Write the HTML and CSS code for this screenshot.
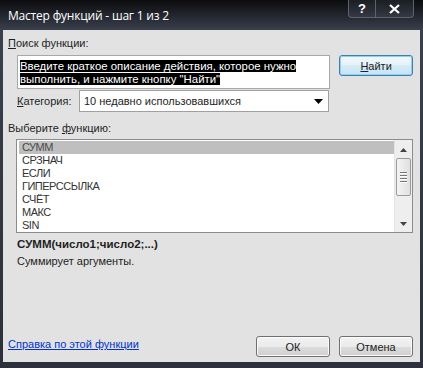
FILE: index.html
```html
<!DOCTYPE html>
<html lang="ru">
<head>
    <meta charset="UTF-8">
    <title>Мастер функций - шаг 1 из 2</title>
    <link rel="stylesheet" href="styles.css">
</head>
<body>

    <div class="window">
        <div class="titlebar">
            <div class="title">Мастер функций - шаг 1 из 2</div>
            <div class="caption-buttons">
                <div class="cap-btn cap-help">?</div>
                <div class="cap-btn cap-close">
                    <svg width="11" height="10" viewBox="0 0 11 10">
                        <path d="M1 1 L10 9 M10 1 L1 9" stroke="#fff" stroke-width="2.2"/>
                    </svg>
                </div>
            </div>
        </div>

        <div class="client">
            <div class="label"><u>П</u>оиск функции:</div>

            <div class="search-row">
                <div class="search-box">
                    <span class="selected-text">Введите краткое описание действия, которое нужно</span><br>
                    <span class="selected-text">выполнить, и нажмите кнопку "Найти"</span>
                </div>
                <div class="btn btn-default"><u>Н</u>айти</div>
            </div>

            <div class="category-row">
                <div class="label-inline"><u>К</u>атегория:</div>
                <div class="select">
                    <span>10 недавно использовавшихся</span>
                    <svg class="select-arrow" width="9" height="5" viewBox="0 0 9 5">
                        <path d="M0 0 H9 L4.5 5 Z" fill="#000"/>
                    </svg>
                </div>
            </div>

            <div class="label list-label">Выберите <u>ф</u>ункцию:</div>

            <div class="listbox">
                <div class="list-items">
                    <div class="item item-selected">СУММ</div>
                    <div class="item">СРЗНАЧ</div>
                    <div class="item">ЕСЛИ</div>
                    <div class="item">ГИПЕРССЫЛКА</div>
                    <div class="item">СЧЁТ</div>
                    <div class="item">МАКС</div>
                    <div class="item">SIN</div>
                </div>
                <div class="scrollbar">
                    <svg class="sb-arrow" width="7" height="4" viewBox="0 0 7 4">
                        <path d="M0 4 H7 L3.5 0 Z" fill="#444"/>
                    </svg>
                    <div class="sb-track">
                        <div class="sb-thumb">
                            <div class="grip"></div>
                            <div class="grip"></div>
                            <div class="grip"></div>
                            <div class="grip"></div>
                        </div>
                    </div>
                    <svg class="sb-arrow" width="7" height="4" viewBox="0 0 7 4">
                        <path d="M0 0 H7 L3.5 4 Z" fill="#444"/>
                    </svg>
                </div>
            </div>

            <div class="syntax">СУММ(число1;число2;...)</div>
            <div class="description">Суммирует аргументы.</div>

            <div class="footer">
                <a class="help-link" href="#">Справка по этой функции</a>
                <div class="footer-buttons">
                    <div class="btn">ОК</div>
                    <div class="btn">Отмена</div>
                </div>
            </div>
        </div>
    </div>

</body>
</html>
```

FILE: styles.css
```css
body {
    margin: 0;
    padding: 0;
    background: #1a1d24;
    font-family: 'Liberation Sans', Arial, sans-serif;
    font-size: 11px;
    color: #1e1e1e;
}

.window {
    width: 423px;
    height: 368px;
    box-sizing: border-box;
    padding: 0 3px 6px 3px;
    background: linear-gradient(#0c0c0e 0px, #2a2e38 20px, #3a404c 30px, #2c303a 100%);
    display: flex;
    flex-direction: column;
}

.titlebar {
    height: 30px;
    display: flex;
    justify-content: space-between;
    flex-shrink: 0;
}

.title {
    color: #fff;
    font-family: 'Open Sans', sans-serif;
    font-size: 12px;
    padding: 7px 0 0 5px;
    letter-spacing: -0.2px;
}

.caption-buttons {
    display: flex;
    height: 17px;
    margin-right: 6px;
    border: 1px solid #5c6270;
    border-top: none;
    border-radius: 0 0 4px 4px;
    background: linear-gradient(#1c1e24, #343842);
}

.cap-btn {
    display: flex;
    justify-content: center;
    align-items: center;
    color: #fff;
    font-weight: bold;
    font-size: 13px;
}

.cap-help {
    width: 26px;
    border-right: 1px solid #5c6270;
}

.cap-close {
    width: 37px;
}

.client {
    flex: 1;
    background: #e2e2e2;
    padding: 6px 7px 0 5px;
    display: flex;
    flex-direction: column;
}

.label {
    line-height: 14px;
}

.search-row {
    display: flex;
    margin-top: 5px;
    padding-left: 9px;
}

.search-box {
    width: 305px;
    height: 28px;
    background: #fff;
    border: 1px solid #a8a8a8;
    padding: 4px 5px 0 2px;
    font-size: 11.4px;
    line-height: 13px;
}

.selected-text {
    background: #000;
    color: #fff;
}

.btn {
    width: 72px;
    height: 19px;
    border: 1px solid #707070;
    border-radius: 3px;
    background: linear-gradient(#f2f2f2 0%, #ebebeb 50%, #dddddd 50%, #cfcfcf 100%);
    display: flex;
    justify-content: center;
    align-items: center;
    box-shadow: inset 0 0 0 1px #fbfbfb;
    color: #222;
}

.btn-default {
    margin-left: 9px;
    border-color: #3c7fb1;
    box-shadow: inset 0 0 0 1px #8ed1f0;
    background: linear-gradient(#f2f8fb 0%, #e6f2f9 50%, #d6ebf6 50%, #c6e3f4 100%);
}

.category-row {
    display: flex;
    align-items: center;
    margin-top: 1px;
    padding-left: 9px;
}

.label-inline {
    width: 62px;
}

.select {
    width: 239px;
    height: 20px;
    border: 1px solid #a0a0a0;
    background: #fff;
    display: flex;
    align-items: center;
    justify-content: space-between;
    padding: 0 5px 0 4px;
}

.list-label {
    margin-top: 9px;
}

.listbox {
    margin: 4px 0 0 8px;
    height: 92px;
    border: 1px solid #8c8c8c;
    background: #fff;
    display: flex;
}

.list-items {
    flex: 1;
    padding: 1px 0 0 2px;
}

.item {
    height: 13px;
    line-height: 13px;
    padding-left: 3px;
    color: #333;
    letter-spacing: -0.5px;
}

.item-selected {
    background: #bfbfbf;
    color: #4a4a4a;
}

.scrollbar {
    width: 17px;
    background: #eeeeee;
    border-left: 1px solid #e4e4e4;
    display: flex;
    flex-direction: column;
    align-items: center;
}

.sb-arrow {
    margin: 8px 0 6px 0;
}

.sb-track {
    flex: 1;
    width: 100%;
}

.sb-thumb {
    margin: 0 1px;
    height: 36px;
    border: 1px solid #9a9a9a;
    border-radius: 2px;
    background: linear-gradient(90deg, #f4f4f4, #e0e0e0);
    display: flex;
    flex-direction: column;
    justify-content: center;
    align-items: center;
    gap: 1px;
}

.grip {
    width: 7px;
    height: 1px;
    background: #777;
    border-bottom: 1px solid #fff;
}

.syntax {
    margin: 4px 0 0 9px;
    font-weight: bold;
    font-size: 11.5px;
    line-height: 14px;
}

.description {
    margin: 3px 0 0 9px;
    line-height: 14px;
}

.footer {
    margin-top: auto;
    margin-bottom: 5px;
    display: flex;
    justify-content: space-between;
    align-items: center;
}

.help-link {
    color: #0033cc;
    margin-bottom: 5px;
}

.footer-buttons {
    display: flex;
    gap: 9px;
}
```
